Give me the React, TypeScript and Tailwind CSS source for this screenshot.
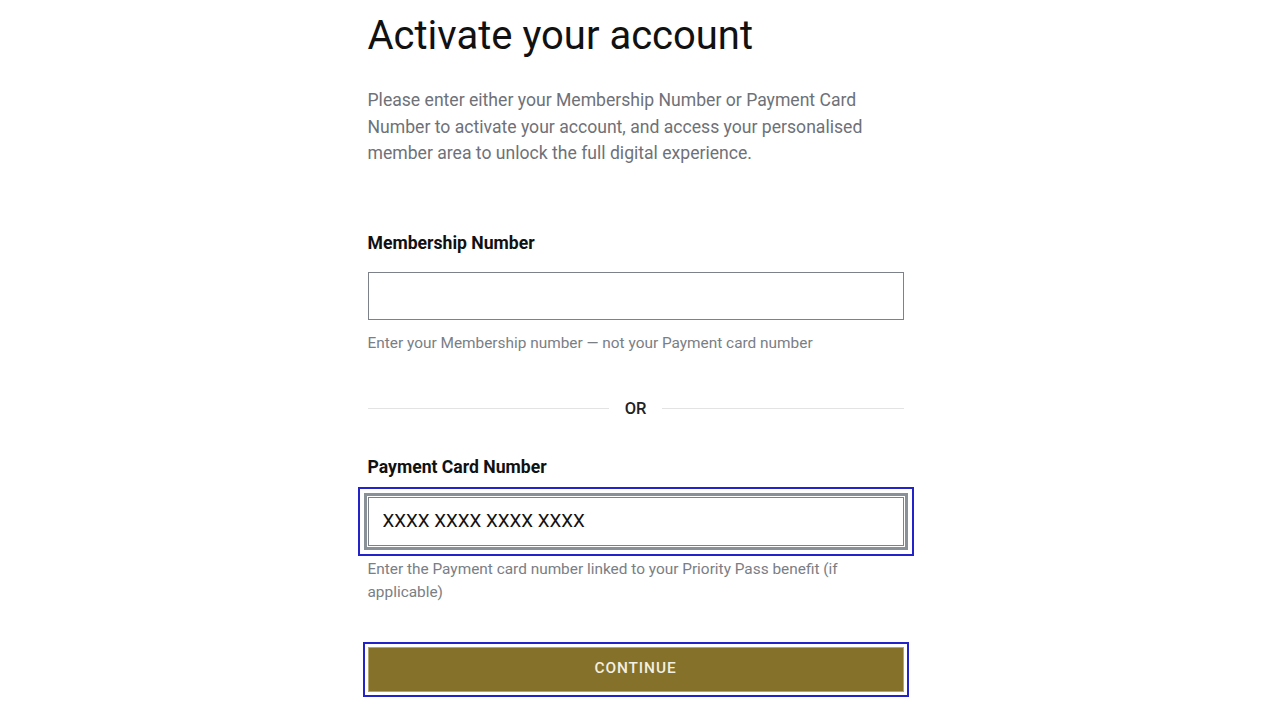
export default function App() {
  return (
    <main className="min-h-screen bg-white pl-[2px] font-['Roboto',sans-serif]">
      <section className="mx-auto w-[536px] pt-3">
        <h1 className="text-[40px] leading-[48px] font-normal text-[#111111]">Activate your account</h1>
        <p className="mt-[27px] text-[17.6px] leading-[26.5px] text-[#6e7178]">
          Please enter either your Membership Number or Payment Card Number to activate your account, and
          access your personalised member area to unlock the full digital experience.
        </p>

        <label className="mt-[64px] block text-[17.6px] leading-6 font-bold text-[#111111]">Membership Number</label>
        <input
          type="text"
          className="mt-[17px] block h-12 w-full border border-[#7d828a] bg-white px-3 text-[18.8px] text-[#111111] outline-none"
        />
        <p className="mt-[13px] text-[15.4px] leading-5 text-[#7a7e85]">
          Enter your Membership number — not your Payment card number
        </p>

        <div className="mt-[44px] flex items-center gap-4">
          <div className="h-px flex-1 bg-[#e3e3e3]" />
          <span className="text-[16.5px] leading-6 font-medium text-[#222222]">OR</span>
          <div className="h-px flex-1 bg-[#e3e3e3]" />
        </div>

        <label className="mt-[34px] block text-[17.6px] leading-6 font-bold text-[#111111]">Payment Card Number</label>
        <input
          type="text"
          defaultValue="XXXX XXXX XXXX XXXX"
          className="mt-[18px] block h-[49px] w-full border border-[#7d828a] bg-white px-[14px] text-[18.8px] text-[#111111] shadow-[0_0_0_1px_#ffffff,0_0_0_4px_#8a9098] outline-2 outline-offset-[8px] outline-[#2323c8] outline-solid"
        />
        <p className="mt-[12px] text-[15.4px] leading-[23px] text-[#7a7e85]">
          Enter the Payment card number linked to your Priority Pass benefit (if
          <br />
          applicable)
        </p>

        <button
          type="button"
          className="mt-[43px] block h-[45px] w-full border border-[#b5a66a] bg-[#85712a] text-[15.4px] font-medium tracking-[0.06em] text-[#f3efe2] outline-2 outline-offset-[3px] outline-[#2323c8] outline-solid"
        >
          CONTINUE
        </button>
      </section>
    </main>
  );
}
